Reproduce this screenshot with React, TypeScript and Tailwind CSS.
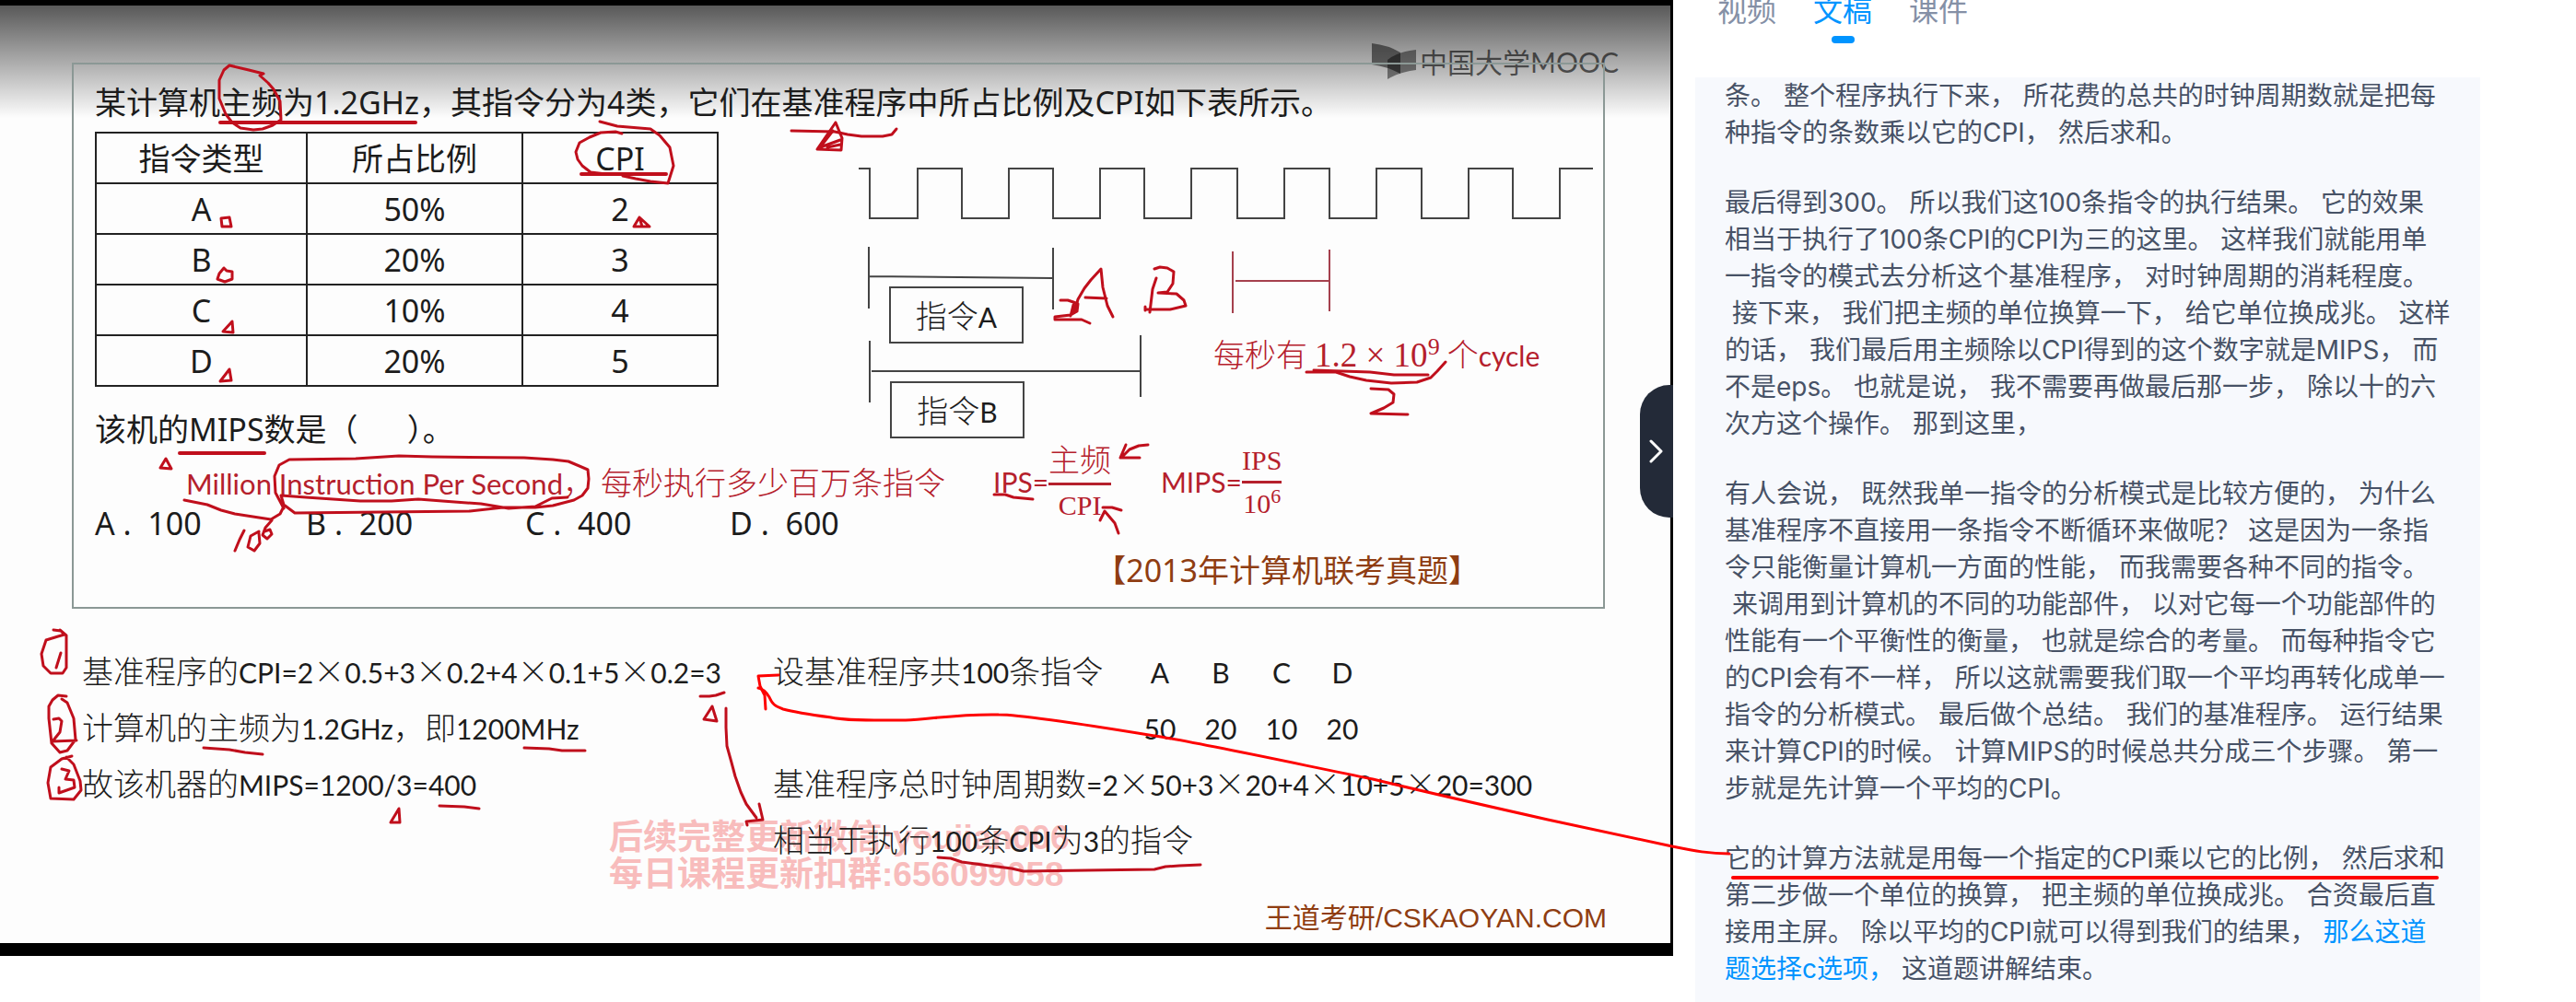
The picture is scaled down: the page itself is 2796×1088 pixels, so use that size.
import { Fragment, type ReactNode } from "react";

const SANS = "font-['Noto_Sans','Noto_Sans_CJK_SC',sans-serif]";
const SLIM = "font-['Noto_Sans_CJK_SC',sans-serif] font-light";
const SERIF = "font-['Liberation_Serif',serif]";

/* Latin runs of the lecture notes are set in a narrower face than the Chinese */
function Mixed({ text }: { text: string }) {
  return (
    <>
      {text.split(/([!-~]+(?: [!-~]+)*)/).map((part, i) =>
        i % 2 === 1 ? (
          <span key={i} className="font-['Lato',sans-serif] text-[30px] font-normal leading-none">
            {part}
          </span>
        ) : (
          <Fragment key={i}>{part}</Fragment>
        ),
      )}
    </>
  );
}

const rows = [
  ["A", "50%", "2"],
  ["B", "20%", "3"],
  ["C", "10%", "4"],
  ["D", "20%", "5"],
];

function RatioTable() {
  const cell = "border-2 border-[#222] p-0 text-center font-normal";
  return (
    <table className="w-[677px] shrink-0 table-fixed border-collapse text-[34px] leading-[40px]">
      <colgroup>
        <col className="w-[229px]" />
        <col className="w-[234px]" />
        <col />
      </colgroup>
      <thead>
        <tr className="h-[55px]">
          <th scope="col" className={cell}>指令类型</th>
          <th scope="col" className={cell}>所占比例</th>
          <th scope="col" className={cell}>CPI</th>
        </tr>
      </thead>
      <tbody>
        {rows.map((r) => (
          <tr key={r[0]} className="h-[55px]">
            {r.map((c, i) => (
              <td key={i} className={cell}>{c}</td>
            ))}
          </tr>
        ))}
      </tbody>
    </table>
  );
}

function Diagram() {
  const box =
    "absolute flex h-[62px] w-[146px] items-center justify-center border-2 border-[#444] text-[34px] leading-[48px]";
  return (
    <div className={`relative flex-1 ${SLIM}`}>
      <svg
        className="absolute left-0 top-0 h-[340px] w-[961px]"
        viewBox="780 143 961 340"
        fill="none"
        stroke="#444"
        strokeWidth="2"
        aria-hidden="true"
      >
        <path d="M932 183H944V237H996V183H1044V237H1095V183H1143V237H1194V183H1242V237H1293V183H1343V237H1394V183H1443V237H1494V183H1543V237H1594V183H1642V237H1693V183H1729" />
        <path d="M943 268V335M1143 269V336M943 300L1143 302M944 370V437M1238 364V431M946 403H1238" />
        <path stroke="#a5404d" d="M1338 273V340M1443 271V338M1341 305H1443" />
      </svg>
      <div className={`${box} left-[185px] top-[168px]`}><span><Mixed text="指令A" /></span></div>
      <div className={`${box} left-[186px] top-[271px]`}><span><Mixed text="指令B" /></span></div>
      <p className="absolute left-[537px] top-[217px] flex items-baseline whitespace-nowrap text-[34px] leading-[48px] text-[#b5202c]">
        每秒有
        <span className={`ml-2 text-[37px] font-normal ${SERIF}`}>
          1.2 × 10<sup className="text-[26px]">9</sup>
        </span>
        <span className="ml-2"><Mixed text="个cycle" /></span>
      </p>
    </div>
  );
}

function Fraction({ top, bottom }: { top: ReactNode; bottom: ReactNode }) {
  return (
    <span className={`inline-flex flex-col items-center text-[30px] leading-[36px] ${SERIF}`}>
      <span className="border-b-[3px] border-[#b5202c] pb-1">{top}</span>
      <span className="pt-1">{bottom}</span>
    </span>
  );
}

function MoocLogo() {
  return (
    <div className="absolute right-[56px] top-[41px] flex items-center text-black/60">
      <svg className="h-[40px] w-[48px]" viewBox="0 0 48 40" aria-hidden="true">
        <path d="M0 0Q18 2 31 10V33Q16 25 0 23Z" fill="#000" fillOpacity=".5" />
        <path d="M48 7Q28 9 17 18V39Q30 31 48 29Z" fill="#000" fillOpacity=".45" />
      </svg>
      <span className="ml-1 whitespace-nowrap font-['Lato','Noto_Sans_CJK_SC',sans-serif] text-[30px] leading-[40px]">
        中国大学MOOC
      </span>
    </div>
  );
}

function Slide() {
  return (
    <section
      aria-label="课程视频"
      className="relative border-b-[14px] border-r-[3px] border-t-[6px] border-black bg-[#fdfdfd] text-[#1c1c1c]"
    >
      <div className="absolute inset-x-0 top-0 h-[122px] bg-linear-to-b from-black/65 to-transparent" />
      <MoocLogo />

      <div className={`relative ml-[78px] mr-[71px] mt-[62px] h-[593px] border-2 border-[#8b9895] pl-[23px] pt-[17px] ${SANS}`}>
        <p className="whitespace-nowrap text-[34px] leading-[48px]">
          某计算机主频为1.2GHz，其指令分为4类，它们在基准程序中所占比例及CPI如下表所示。
        </p>
        <div className="mt-2 flex">
          <RatioTable />
          <Diagram />
        </div>
        <p className="mt-[22px] whitespace-pre text-[34px] leading-[48px]">该机的MIPS数是（{"      "}）。</p>

        <div className={`mt-[7px] flex h-[52px] items-center whitespace-nowrap pl-[99px] text-[34px] leading-[48px] text-[#b5202c] ${SLIM}`}>
          <span className="w-[450px]">
            <span className="font-['Lato',sans-serif] text-[31px] font-normal leading-none">Million Instruction Per Second</span>，
          </span>
          <span className="w-[426px]">每秒执行多少百万条指令</span>
          <span className="flex w-[182px] items-center">
            <Mixed text="IPS=" />
            <Fraction top={<span className={`text-[34px] ${SLIM}`}>主频</span>} bottom="CPI" />
          </span>
          <span className="flex items-center">
            <Mixed text="MIPS=" />
            <Fraction top="IPS" bottom={<>10<sup className="text-[22px]">6</sup></>} />
          </span>
        </div>

        <ul className="mt-px grid grid-cols-[229px_238px_222px_200px] whitespace-pre text-[34px] leading-[36px]">
          <li>{"A .  100"}</li>
          <li>{"B .  200"}</li>
          <li>{"C .  400"}</li>
          <li>{"D .  600"}</li>
        </ul>
        <p className="mr-[134px] mt-[13px] text-right text-[34px] leading-[40px] text-[#8f3d12]">
          【2013年计算机联考真题】
        </p>
      </div>

      <div aria-hidden="true" className="absolute left-[661px] top-[884px] whitespace-nowrap font-['Liberation_Sans','Noto_Sans_CJK_SC',sans-serif] text-[37px] font-bold leading-[40px] text-[#f8bcbc]">
        <p>后续完整更新微信:youjian006</p>
        <p>每日课程更新扣群:656099058</p>
      </div>

      <div className={`relative mt-9 grid grid-cols-[750px_1fr] whitespace-nowrap pl-[89px] text-[34px] leading-[61px] ${SLIM}`}>
        <ol>
          <li><Mixed text="基准程序的CPI=2×0.5+3×0.2+4×0.1+5×0.2=3" /></li>
          <li><Mixed text="计算机的主频为1.2GHz，即1200MHz" /></li>
          <li><Mixed text="故该机器的MIPS=1200/3=400" /></li>
        </ol>
        <div>
          <dl className="grid grid-flow-col grid-cols-[387px_repeat(4,66px)] grid-rows-2 text-center">
            <div className="row-span-2 text-left"><Mixed text="设基准程序共100条指令" /></div>
            {[["A", "50"], ["B", "20"], ["C", "10"], ["D", "20"]].map(([k, v]) => (
              <div key={k} className="row-span-2">
                <dt><Mixed text={k} /></dt>
                <dd><Mixed text={v} /></dd>
              </div>
            ))}
          </dl>
          <p><Mixed text="基准程序总时钟周期数=2×50+3×20+4×10+5×20=300" /></p>
          <p><Mixed text="相当于执行100条CPI为3的指令" /></p>
        </div>
      </div>
      <p className="relative mb-[7px] mr-[69px] mt-9 text-right font-['Liberation_Sans','Noto_Sans_CJK_SC',sans-serif] text-[30px] leading-[40px] text-[#8f3d12]">
        王道考研/CSKAOYAN.COM
      </p>

      <button
        type="button"
        aria-label="收起侧栏"
        className="absolute -right-[3px] top-[412px] flex h-[144px] w-9 items-center justify-center rounded-l-[32px] bg-[#232a38] text-white"
      >
        <svg className="h-[26px] w-[16px] shrink-0" viewBox="0 0 16 26" fill="none" stroke="currentColor" strokeWidth="3" strokeLinecap="round" strokeLinejoin="round" aria-hidden="true">
          <path d="M2 2L13 13L2 24" />
        </svg>
      </button>
    </section>
  );
}

const paragraphs = [
  ["条。 整个程序执行下来， 所花费的总共的时钟周期数就是把每", "种指令的条数乘以它的CPI， 然后求和。"],
  [
    "最后得到300。 所以我们这100条指令的执行结果。 它的效果",
    "相当于执行了100条CPI的CPI为三的这里。 这样我们就能用单",
    "一指令的模式去分析这个基准程序， 对时钟周期的消耗程度。",
    " 接下来， 我们把主频的单位换算一下， 给它单位换成兆。 这样",
    "的话， 我们最后用主频除以CPI得到的这个数字就是MIPS， 而",
    "不是eps。 也就是说， 我不需要再做最后那一步， 除以十的六",
    "次方这个操作。 那到这里，",
  ],
  [
    "有人会说， 既然我单一指令的分析模式是比较方便的， 为什么",
    "基准程序不直接用一条指令不断循环来做呢？ 这是因为一条指",
    "令只能衡量计算机一方面的性能， 而我需要各种不同的指令。",
    " 来调用到计算机的不同的功能部件， 以对它每一个功能部件的",
    "性能有一个平衡性的衡量， 也就是综合的考量。 而每种指令它",
    "的CPI会有不一样， 所以这就需要我们取一个平均再转化成单一",
    "指令的分析模式。 最后做个总结。 我们的基准程序。 运行结果",
    "来计算CPI的时候。 计算MIPS的时候总共分成三个步骤。 第一",
    "步就是先计算一个平均的CPI。",
  ],
];

function Transcript() {
  return (
    <aside className="pl-6 pr-[104px] font-['Inter','Noto_Sans_CJK_SC',sans-serif]">
      <div role="tablist" className="flex h-[84px] gap-10 pl-6 text-[32px] leading-[40px] text-[#8590a6]">
        <button type="button" role="tab" aria-selected="false" className="-mt-2 h-[40px]">视频</button>
        <button type="button" role="tab" aria-selected="true" className="-mt-2 flex h-[55px] flex-col items-center justify-between text-[#0094ff]">
          文稿
          <span className="h-2 w-[25px] rounded-full bg-[#0094ff]" />
        </button>
        <button type="button" role="tab" aria-selected="false" className="-mt-2 h-[40px]">课件</button>
      </div>
      <div role="tabpanel" className="min-h-[1004px] space-y-9 whitespace-pre bg-[#f7f9fd] pl-8 text-[28px] leading-[40px] text-[#475266]">
        {paragraphs.map((lines) => (
          <p key={lines[0]}>{lines.join("\n")}</p>
        ))}
        <p>
          {"它的计算方法就是用每一个指定的CPI乘以它的比例， 然后求和\n第二步做一个单位的换算， 把主频的单位换成兆。 合资最后直\n接用主屏。 除以平均的CPI就可以得到我们的结果， "}
          <span className="text-[#0094ff]">{"那么这道\n题选择c选项，"}</span>
          {" 这道题讲解结束。"}
        </p>
      </div>
    </aside>
  );
}

/* Pen strokes drawn over the lecture */
const ink = [
  "M249 71L243 76L238 87L238 107L245 124L252 133L261 139L275 141L285 140L296 136L305 130L304 110L297 97L291 90L282 82L286 80L270 76L249 71",
  "M651 132L670 137L706 140L716 147L727 160L731 180L725 199L706 197L690 194L676 191",
  "M675 145L668 143L652 144L640 149L629 155L625 165L627 173L632 180L641 187L658 189",
  "M240 237L249 236L251 246L241 246Z",
  "M694 236L688 246L705 246L694 236L697 246",
  "M243 291L238 297L236 303L244 306L252 303L252 295L246 294L243 291",
  "M252 349L242 360L253 361Z",
  "M249 401L239 414L251 413Z",
  "M859 142L906 143L920 146L935 148L958 148L968 146L973 140",
  "M907 133L887 162L913 163L914 150L907 133M904 142L890 160L912 152M898 160L912 157",
  "M1168 332L1170 325L1177 313L1184 304L1195 292L1197 312L1202 332L1208 344M1178 323L1201 324",
  "M1151 326L1159 326L1165 328L1170 330L1169 338L1162 342L1145 344L1145 347L1153 347L1174 347L1183 351M1165 331L1162 343M1168 331L1165 340",
  "M1255 302L1251 314L1248 339M1253 292L1259 290L1267 291L1274 295L1273 308L1267 317L1257 318L1277 319L1285 326L1287 332L1270 336L1243 336M1243 333V337",
  "M1418 404L1450 404L1465 409L1483 413L1510 416L1538 415L1553 410L1560 403L1569 393",
  "M1426 402L1487 404L1513 407L1550 407",
  "M1488 422L1507 423L1513 428L1512 437L1502 443L1488 449L1528 450",
  "M180 498L174 508L186 509Z",
  "M308 552L299 535L298 517L303 505L314 499L386 498L433 495L469 496L569 497L600 499L617 501L638 510L639 520L638 530L632 538L623 543L600 549L581 551L546 551L510 555L320 557L308 548L305 538L332 540L391 544L425 544L454 542L480 544L522 547L552 552L581 550L599 541L616 540",
  "M200 543L225 548L240 554L255 558L294 564L304 558L308 550",
  "M265 576L260 586L255 598M281 577L272 582L269 594L276 598L282 590L281 579M295 565L288 573L285 581L290 585L295 580L293 575L287 577",
  "M1079 537L1091 537L1100 540L1121 542",
  "M1246 483L1236 484L1226 488L1217 497M1222 483L1216 497L1237 497",
  "M1214 579L1210 568L1199 555L1194 565M1197 551L1207 551L1217 554",
  "M58 684L66 685L70 689L63 691L50 695L45 710L47 723L55 731L68 731L72 725L72 690L65 684M66 709L61 725",
  "M72 756L63 755L57 760L53 767L53 780L56 807L65 817L73 815L82 803L80 780L73 763L67 759M58 781L64 780L67 783L65 795L57 805L83 804",
  "M78 821L67 824L55 833L52 850L55 867L80 868L88 858L87 848L80 830L72 822M67 835L75 837L71 846L80 847L81 855L64 861L64 855",
  "M760 756L770 756L777 755L786 752",
  "M773 767L764 781L778 783L773 767",
  "M788 769L788 790L789 810L794 828L798 843L804 860L810 873L821 888M824 873L828 890L810 892L811 896",
  "M221 812L249 814L266 817L285 819",
  "M569 812L596 813L610 815L635 815",
  "M477 875L504 876L520 878",
  "M433 878L424 893L434 893Z",
  "M1018 931L1032 932L1044 936L1074 940L1098 943L1111 946L1180 945L1253 944L1265 941L1280 940L1303 939",
];

export default function App() {
  return (
    <main className="relative grid min-h-screen grid-cols-[1816fr_980fr] items-start bg-white">
      <Slide />
      <Transcript />
      <svg
        className="pointer-events-none absolute left-0 top-0 w-full"
        viewBox="0 0 2796 1088"
        fill="none"
        strokeLinecap="round"
        strokeLinejoin="round"
        aria-hidden="true"
      >
        <g stroke="#c00f1c" strokeWidth="3">
          {ink.map((d) => (
            <path key={d} d={d} />
          ))}
          <path strokeWidth="4" d="M239 133H451M631 189H723M195 492H287" />
        </g>
        <g stroke="#fe0000" strokeWidth="3">
          <path d="M845 733L823 734L825 745L830 755L831 770" />
          <path d="M823 747C829 748 832 752 835 757C838 764 841 767 850 770C865 774 880 776 902 779C920 783 950 782 983 782C1010 781 1040 775 1084 776C1110 776 1180 787 1253 799C1300 806 1420 832 1490 846C1560 863 1600 872 1680 890L1815 919C1840 924 1855 927 1877 927" />
          <path strokeWidth="4" d="M1881 953H2645" />
        </g>
      </svg>
    </main>
  );
}
